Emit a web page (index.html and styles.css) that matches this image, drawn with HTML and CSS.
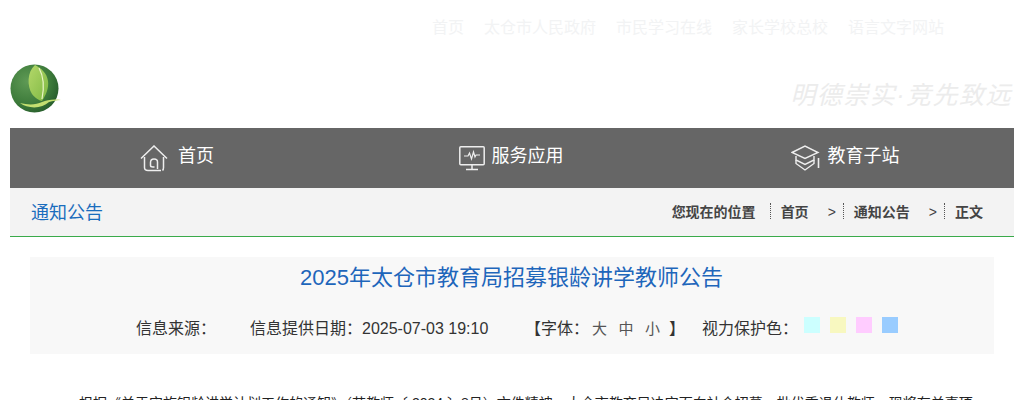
FILE: index.html
```html
<!DOCTYPE html>
<html lang="zh-CN">
<head>
    <meta charset="UTF-8">
    <title>2025年太仓市教育局招募银龄讲学教师公告</title>
    <link rel="stylesheet" href="styles.css">
</head>
<body>

    <header class="top">
        <div class="top-links">
            <a>首页</a>
            <a>太仓市人民政府</a>
            <a>市民学习在线</a>
            <a>家长学校总校</a>
            <a>语言文字网站</a>
        </div>
        <div class="brand">
            <svg class="logo" width="52" height="50" viewBox="0 0 52 50" aria-label="logo">
                <defs>
                    <radialGradient id="ball" cx="35%" cy="35%" r="75%">
                        <stop offset="0" stop-color="#5f9a55"/>
                        <stop offset="0.65" stop-color="#3c7a3a"/>
                        <stop offset="1" stop-color="#24592a"/>
                    </radialGradient>
                    <linearGradient id="leaf" x1="0" y1="0" x2="1" y2="1">
                        <stop offset="0" stop-color="#b4d86a"/>
                        <stop offset="1" stop-color="#7fb843"/>
                    </linearGradient>
                </defs>
                <circle cx="24.5" cy="24.5" r="24" fill="url(#ball)"/>
                <path d="M25 1C17 8 17 22 22 30C25 34 30 37 32 37C36 31 39 24 38 17C37 9 31 4 25 1Z" fill="url(#leaf)"/>
                <path d="M29 4C34 13 34 25 32 35" fill="none" stroke="#eaf5c8" stroke-width="1.2"/>
                <path d="M10 39C18 45 32 45 39 38C43 37 47 36 51 36C43 35 37 36 32 38C26 41 18 41 10 39Z" fill="#c3de70"/>
            </svg>
            <div class="slogan">明德崇实·竞先致远</div>
        </div>
    </header>

    <nav class="main-nav">
        <a class="nav-item">
            <svg width="28" height="27" viewBox="0 0 28 27" fill="none" stroke="#eee" stroke-width="1.5">
                <path d="M1 13.5L14 1L27 13.5"/>
                <path d="M4.5 12V22.5Q4.5 25.5 8 25.5H21"/>
                <path d="M23.5 12V22.5Q23.5 24.5 22.5 25.5"/>
                <path d="M17.5 24V17Q17.5 14 14 14Q10.5 14 10.5 17.5V20.5Q10.5 22 13 22H14.5"/>
            </svg>
            <span>首页</span>
        </a>
        <a class="nav-item nav-mid">
            <svg width="26" height="25" viewBox="0 0 26 25" fill="none" stroke="#eee" stroke-width="1.5">
                <rect x="0.8" y="0.8" width="24.4" height="18" rx="1"/>
                <path d="M5 10H9L10.5 7L12.5 13L14.5 6L16 11L17 9H21" stroke-width="1.2"/>
                <path d="M13 19V23M7 23.5H19"/>
            </svg>
            <span>服务应用</span>
        </a>
        <a class="nav-item nav-cap">
            <svg width="29" height="26" viewBox="0 0 29 26" fill="none" stroke="#eee" stroke-width="1.4">
                <path d="M1 7.5L14 1L27 7.5L14 13.5Z"/>
                <path d="M5 11V15L14 19.5L23 15V11"/>
                <path d="M5 15V18.5L14 25L23 18.5V15"/>
                <path d="M27.5 13V23" stroke-width="1.6"/>
            </svg>
            <span>教育子站</span>
        </a>
    </nav>

    <div class="crumb-bar">
        <h2 class="section-name">通知公告</h2>
        <div class="crumbs">
            <span class="crumb-here">您现在的位置</span>
            <span class="crumb">首页<i>&gt;</i></span>
            <span class="crumb">通知公告<i>&gt;</i></span>
            <span class="crumb">正文</span>
        </div>
    </div>

    <main class="article">
        <div class="article-head">
            <h1 class="article-title">2025年太仓市教育局招募银龄讲学教师公告</h1>
            <div class="meta">
                <span class="meta-source">信息来源：</span>
                <span class="meta-date">信息提供日期：2025-07-03 19:10</span>
                <span class="meta-font">【字体：<b class="size-big">大</b><b>中</b><b class="size-small">小</b>】</span>
                <span class="meta-eye">视力保护色：</span>
                <span class="swatch swatch-a"></span>
                <span class="swatch swatch-b"></span>
                <span class="swatch swatch-c"></span>
                <span class="swatch swatch-d"></span>
            </div>
        </div>
        <p class="article-body">根据《关于实施银龄讲学计划工作的通知》（苏教师〔 2024 〕8号）文件精神，太仓市教育局决定面向社会招募一批优秀退休教师，现将有关事项公告如下：</p>
    </main>

</body>
</html>
```

FILE: styles.css
```css
* {
    margin: 0;
    padding: 0;
    box-sizing: border-box;
}
body {
    font-family: "Liberation Sans", "Noto Sans CJK SC", sans-serif;
    background-color: white;
    color: #333;
}
.top {
    height: 128px;
    padding: 0 10px;
}
.top-links {
    display: flex;
    gap: 20px;
    padding: 18px 0 0 422px;
    height: 64px;
    font-size: 16px;
    line-height: 20px;
    color: #f2f3f4;
}
.brand {
    display: flex;
    justify-content: space-between;
    align-items: flex-start;
}
.slogan {
    padding: 15px 2px 0 0;
    font-size: 25px;
    line-height: 32px;
    letter-spacing: 1.5px;
    font-style: italic;
    color: #ececec;
    white-space: nowrap;
}
.main-nav {
    display: flex;
    height: 60px;
    margin: 0 10px;
    background-color: #666;
}
.nav-item {
    flex: 1;
    display: flex;
    align-items: center;
    justify-content: center;
    gap: 10px;
    color: white;
    font-size: 18px;
}
.nav-item span {
    margin-bottom: 8px;
}
.nav-mid {
    gap: 7px;
}
.nav-cap {
    gap: 8px;
    padding-right: 2px;
}
.crumb-bar {
    display: flex;
    justify-content: space-between;
    align-items: center;
    height: 49px;
    margin: 0 10px 0 10px;
    padding: 0 31px 2px 21px;
    background-color: #f3f3f3;
    border-bottom: 1px solid #3aaa4a;
}
.section-name {
    font-size: 18px;
    font-weight: normal;
    color: #1a6dbd;
}
.crumbs {
    display: flex;
    align-items: center;
    font-size: 14px;
    font-weight: bold;
    color: #444;
}
.crumb-here {
    padding-right: 14px;
}
.crumb {
    display: flex;
    align-items: center;
    height: 16px;
    padding-left: 10px;
    border-left: 1px dotted #555;
}
.crumb i {
    margin: 2px 7px 0 19px;
    font-style: normal;
    font-weight: normal;
    font-size: 14px;
}
.article {
    padding: 20px 30px 0;
}
.article-head {
    height: 97px;
    background-color: #f8f8f8;
    text-align: center;
}
.article-title {
    padding: 6px 1px 0 0;
    font-size: 22px;
    line-height: 30px;
    font-weight: normal;
    color: #1e66bb;
}
.meta {
    display: flex;
    align-items: center;
    height: 24px;
    margin-top: 22px;
    padding-left: 106px;
    font-size: 16px;
    color: #333;
}
.meta-source {
    width: 114px;
    text-align: left;
}
.meta-date {
    width: 275px;
    text-align: left;
}
.meta-font {
    width: 177px;
    text-align: left;
}
.meta-font b {
    margin-right: 11.5px;
    font-weight: normal;
    font-size: 15px;
    color: #555;
}
.meta-font .size-big {
    margin-left: 3px;
}
.meta-font .size-small {
    margin-right: 9px;
}
.meta-eye {
    width: 102px;
    text-align: left;
}
.swatch {
    width: 16px;
    height: 16px;
    margin-right: 10px;
    margin-top: -5px;
}
.swatch-a {
    background-color: #ccffff;
}
.swatch-b {
    background-color: #f8f8c0;
}
.swatch-c {
    background-color: #ffccff;
}
.swatch-d {
    background-color: #99ccff;
}
.article-body {
    margin-top: 37px;
    padding: 0 21px;
    font-size: 14px;
    line-height: 24px;
    text-indent: 2em;
    color: #222;
}
```
